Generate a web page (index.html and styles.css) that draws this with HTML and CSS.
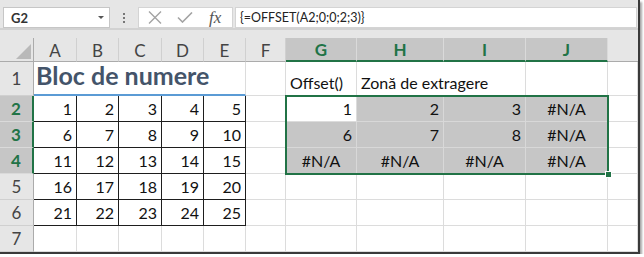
FILE: index.html
```html
<!DOCTYPE html>
<html lang="ro">
<head>
    <meta charset="UTF-8">
    <title>OFFSET</title>
    <link rel="stylesheet" href="styles.css">
</head>
<body>
    <div class="frame">
        <div class="toolbar">
            <div class="namebox"><span>G2</span><span class="caret"></span></div>
            <div class="grip"><i></i><i></i><i></i></div>
            <div class="fxbox">
                <svg class="ico-x" width="14" height="13" viewBox="0 0 14 13"><path d="M1 0.5 L13 12.5 M13 0.5 L1 12.5" stroke="#a3a3a3" stroke-width="1.4" fill="none"/></svg>
                <svg class="ico-ok" width="16" height="11" viewBox="0 0 16 11"><path d="M1 5.5 L5.5 10 L15 0.5" stroke="#a3a3a3" stroke-width="1.6" fill="none"/></svg>
                <span class="fx">fx</span>
            </div>
            <div class="formula">{=OFFSET(A2;0;0;2;3)}</div>
        </div>

        <div class="sheet">
            <!-- header -->
            <div class="corner"></div>
            <div class="h">A</div>
            <div class="h">B</div>
            <div class="h">C</div>
            <div class="h">D</div>
            <div class="h">E</div>
            <div class="h">F</div>
            <div class="h sel">G</div>
            <div class="h sel">H</div>
            <div class="h sel">I</div>
            <div class="h sel">J</div>
            <div class="h last"></div>

            <!-- 1 -->
            <div class="r">1</div>
            <div class="c title">Bloc de numere</div>
            <div class="c"></div>
            <div class="c">Offset()</div>
            <div class="c wide">Zonă de extragere</div>
            <div class="c"></div>
            <div class="c"></div>

            <!-- 2 -->
            <div class="r sel">2</div>
            <div class="c bx num">1</div>
            <div class="c bx num">2</div>
            <div class="c bx num">3</div>
            <div class="c bx num">4</div>
            <div class="c bx num">5</div>
            <div class="c"></div>
            <div class="c num">1</div>
            <div class="c hl num">2</div>
            <div class="c hl num">3</div>
            <div class="c hl err">#N/A</div>
            <div class="c"></div>

            <!-- 3 -->
            <div class="r sel">3</div>
            <div class="c bx num">6</div>
            <div class="c bx num">7</div>
            <div class="c bx num">8</div>
            <div class="c bx num">9</div>
            <div class="c bx num">10</div>
            <div class="c"></div>
            <div class="c hl num">6</div>
            <div class="c hl num">7</div>
            <div class="c hl num">8</div>
            <div class="c hl err">#N/A</div>
            <div class="c"></div>

            <!-- 4 -->
            <div class="r sel">4</div>
            <div class="c bx num">11</div>
            <div class="c bx num">12</div>
            <div class="c bx num">13</div>
            <div class="c bx num">14</div>
            <div class="c bx num">15</div>
            <div class="c"></div>
            <div class="c hl err">#N/A</div>
            <div class="c hl err">#N/A</div>
            <div class="c hl err">#N/A</div>
            <div class="c hl err">#N/A</div>
            <div class="c"></div>

            <!-- 5 -->
            <div class="r">5</div>
            <div class="c bx num">16</div>
            <div class="c bx num">17</div>
            <div class="c bx num">18</div>
            <div class="c bx num">19</div>
            <div class="c bx num">20</div>
            <div class="c"></div>
            <div class="c"></div>
            <div class="c"></div>
            <div class="c"></div>
            <div class="c"></div>
            <div class="c"></div>

            <!-- 6 -->
            <div class="r">6</div>
            <div class="c bx num">21</div>
            <div class="c bx num">22</div>
            <div class="c bx num">23</div>
            <div class="c bx num">24</div>
            <div class="c bx num">25</div>
            <div class="c"></div>
            <div class="c"></div>
            <div class="c"></div>
            <div class="c"></div>
            <div class="c"></div>
            <div class="c"></div>

            <!-- 7 -->
            <div class="r">7</div>
            <div class="c"></div>
            <div class="c"></div>
            <div class="c"></div>
            <div class="c"></div>
            <div class="c"></div>
            <div class="c"></div>
            <div class="c"></div>
            <div class="c"></div>
            <div class="c"></div>
            <div class="c"></div>
            <div class="c"></div>

            <div class="selection"><span class="handle"></span></div>
        </div>
    </div>
</body>
</html>
```

FILE: styles.css
```css
body {
    margin: 0;
    background: #fff;
    font-family: "Lato", "Liberation Sans", sans-serif;
}
.frame {
    width: 638px;
    height: 252px;
    background: #e6e6e6;
    border-right: 2px solid #3a3a3a;
    border-bottom: 2px solid #3a3a3a;
    box-shadow: 2px 2px 2px rgba(0,0,0,0.35);
    overflow: hidden;
}

/* formula bar */
.toolbar {
    display: flex;
    height: 21px;
    padding: 7px 0 0 3px;
    border-bottom: 2px solid #d2d2d2;
    margin-bottom: 8px;
}
.namebox {
    width: 107px;
    box-sizing: border-box;
    border: 1px solid #c6c6c6;
    background: #fff;
    display: flex;
    align-items: center;
    justify-content: space-between;
    padding: 0 5px 0 7px;
    font-size: 13px;
    font-weight: 700;
    color: #333;
}
.caret {
    width: 0;
    height: 0;
    border-left: 3px solid transparent;
    border-right: 3px solid transparent;
    border-top: 3px solid #555;
}
.grip {
    width: 28px;
    display: flex;
    flex-direction: column;
    align-items: center;
    justify-content: center;
    gap: 2px;
}
.grip i {
    width: 2px;
    height: 2px;
    background: #777;
}
.fxbox {
    width: 95px;
    box-sizing: border-box;
    margin-right: 2px;
    border: 1px solid #d4d4d4;
    background: #fff;
    display: flex;
    align-items: center;
    padding-left: 9px;
}
.ico-ok {
    margin-left: 15px;
}
.fx {
    margin-left: 16px;
    font-family: "Liberation Serif", serif;
    font-style: italic;
    font-size: 17px;
    color: #555;
    line-height: 1;
}
.formula {
    flex: 1;
    margin-right: 1px;
    background: #fff;
    border: 1px solid #d4d4d4;
    display: flex;
    align-items: center;
    padding-left: 4px;
    font-size: 12.5px;
    color: #222;
}

/* grid */
.sheet {
    position: relative;
    display: grid;
    grid-template-columns: 34px 43px 42px 43px 42px 42px 40px 71px 87px 82px 82px 1fr;
    grid-template-rows: 24px 34px repeat(6, 26px);
    background: #fff;
    font-size: 16px;
}
.sheet > div {
    box-sizing: border-box;
}
.corner {
    background: #e6e6e6;
    border-right: 1px solid #ababab;
    border-bottom: 1px solid #ababab;
    display: flex;
    align-items: flex-end;
    justify-content: flex-end;
    padding: 0 2px 2px 0;
}
.corner::after {
    content: "";
    border-left: 15px solid transparent;
    border-bottom: 15px solid #b9b9b9;
}
.h {
    background: #e6e6e6;
    border-right: 1px solid #d0d0d0;
    border-bottom: 1px solid #ababab;
    color: #444;
    font-size: 17px;
    display: flex;
    align-items: center;
    justify-content: center;
    padding-top: 1px;
}
.h.sel {
    background: #c6c6c6;
    border-right-color: #dadada;
    border-bottom: 2px solid #217346;
    color: #217346;
    font-weight: 700;
}
.h.last {
    border-right: 0;
}
.r {
    background: #e6e6e6;
    border-right: 1px solid #ababab;
    border-bottom: 1px solid #d0d0d0;
    color: #444;
    font-size: 17px;
    display: flex;
    align-items: center;
    justify-content: center;
}
.r.sel {
    background: #c6c6c6;
    border-right: 2px solid #217346;
    border-bottom-color: #dadada;
    color: #217346;
    font-weight: 700;
}
.c {
    border-right: 1px solid #dcdcdc;
    border-bottom: 1px solid #dcdcdc;
    display: flex;
    align-items: flex-end;
    padding: 0 4px 3px;
    color: #111;
    line-height: 18px;
    white-space: nowrap;
}
.title {
    grid-column: span 5;
    border-right-color: #dcdcdc;
    border-bottom: 2px solid #5b9bd5;
    padding: 0 2px 6px;
    font-size: 25px;
    font-weight: 700;
    color: #44546a;
    line-height: 26px;
}
.wide {
    grid-column: span 2;
}
.num {
    justify-content: flex-end;
}
.err {
    justify-content: center;
}
.bx {
    border-right-color: #1e1e1e;
    border-bottom-color: #1e1e1e;
}
.hl {
    background: #c6c6c6;
    border-right-color: #d8d8d8;
    border-bottom-color: #d8d8d8;
}

/* selection frame over G2:J4 */
.selection {
    position: absolute;
    left: 285px;
    top: 57px;
    width: 324px;
    height: 80px;
    border: 2px solid #217346;
    pointer-events: none;
}
.handle {
    position: absolute;
    right: -5px;
    bottom: -5px;
    width: 5px;
    height: 5px;
    background: #217346;
    border: 1px solid #fff;
}
```
